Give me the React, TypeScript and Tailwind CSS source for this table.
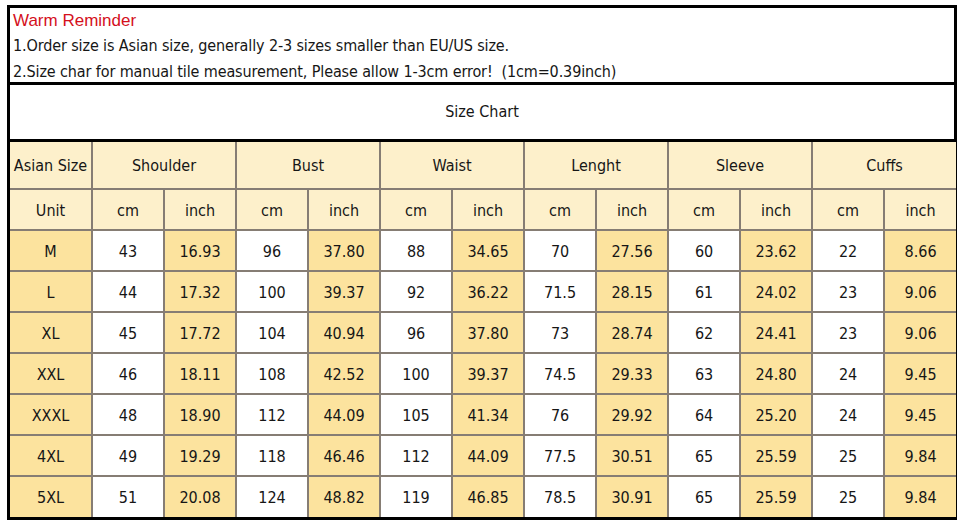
const groups = ['Shoulder', 'Bust', 'Waist', 'Lenght', 'Sleeve', 'Cuffs']

const rows: [string, string[]][] = [
  ['M', ['43', '16.93', '96', '37.80', '88', '34.65', '70', '27.56', '60', '23.62', '22', '8.66']],
  ['L', ['44', '17.32', '100', '39.37', '92', '36.22', '71.5', '28.15', '61', '24.02', '23', '9.06']],
  ['XL', ['45', '17.72', '104', '40.94', '96', '37.80', '73', '28.74', '62', '24.41', '23', '9.06']],
  ['XXL', ['46', '18.11', '108', '42.52', '100', '39.37', '74.5', '29.33', '63', '24.80', '24', '9.45']],
  ['XXXL', ['48', '18.90', '112', '44.09', '105', '41.34', '76', '29.92', '64', '25.20', '24', '9.45']],
  ['4XL', ['49', '19.29', '118', '46.46', '112', '44.09', '77.5', '30.51', '65', '25.59', '25', '9.84']],
  ['5XL', ['51', '20.08', '124', '48.82', '119', '46.85', '78.5', '30.91', '65', '25.59', '25', '9.84']],
]

const font = "font-['DejaVu_Sans_Condensed','DejaVu_Sans',sans-serif]"
const cell = 'border-2 border-[#867d74] text-center align-middle p-0 pt-[2px]'

export default function App() {
  return (
    <div className={`bg-white w-[963px] h-[528px] pt-[5px] pl-[7px] text-[#161616] ${font}`}>
      <div className="w-[950px] border-[3px] border-black">
        {/* Reminder */}
        <div className="h-[77px] pl-[3px] border-b-[3px] border-black">
          <p className="text-[17px] leading-[25px] text-[#d4101c] font-['Liberation_Sans',sans-serif]">
            Warm Reminder
          </p>
          <p className="text-[16px] leading-[26px] tracking-[-0.12px]">
            1.Order size is Asian size, generally 2-3 sizes smaller than EU/US size.
          </p>
          <p className="text-[16px] leading-[26px] tracking-[-0.12px]">
            2.Size char for manual tile measurement, Please allow 1-3cm error!&nbsp; (1cm=0.39inch)
          </p>
        </div>

        {/* Title */}
        <div className="h-[57px] flex items-center justify-center text-[16px] border-b-[3px] border-black">
          Size Chart
        </div>

        <table className="w-[944px] table-fixed border-collapse text-[16px]">
          <colgroup>
            <col className="w-[82px]" />
            {Array.from({ length: 12 }).map((_, i) => (
              <col key={i} className="w-[72px]" />
            ))}
          </colgroup>
          <tbody>
            <tr className="h-[47px] bg-[#fdf0cb]">
              <td className={`${cell} border-t-0 border-l-0`}>Asian Size</td>
              {groups.map((g, i) => (
                <td
                  key={g}
                  colSpan={2}
                  className={`${cell} border-t-0 ${i === groups.length - 1 ? 'border-r-0' : ''}`}
                >
                  {g}
                </td>
              ))}
            </tr>
            <tr className="h-[41px] bg-[#fdf0cb]">
              <td className={`${cell} border-l-0`}>Unit</td>
              {Array.from({ length: 12 }).map((_, i) => (
                <td key={i} className={`${cell} ${i === 11 ? 'border-r-0' : ''}`}>
                  {i % 2 === 0 ? 'cm' : 'inch'}
                </td>
              ))}
            </tr>
            {rows.map(([size, vals], r) => (
              <tr key={size} className="h-[41px]">
                <td
                  className={`${cell} border-l-0 bg-[#fce39e] ${r === rows.length - 1 ? 'border-b-0' : ''}`}
                >
                  {size}
                </td>
                {vals.map((v, i) => (
                  <td
                    key={i}
                    className={`${cell} ${i % 2 === 1 ? 'bg-[#fce39e]' : 'bg-white'} ${
                      i === 11 ? 'border-r-0' : ''
                    } ${r === rows.length - 1 ? 'border-b-0' : ''}`}
                  >
                    {v}
                  </td>
                ))}
              </tr>
            ))}
          </tbody>
        </table>
      </div>
    </div>
  )
}
